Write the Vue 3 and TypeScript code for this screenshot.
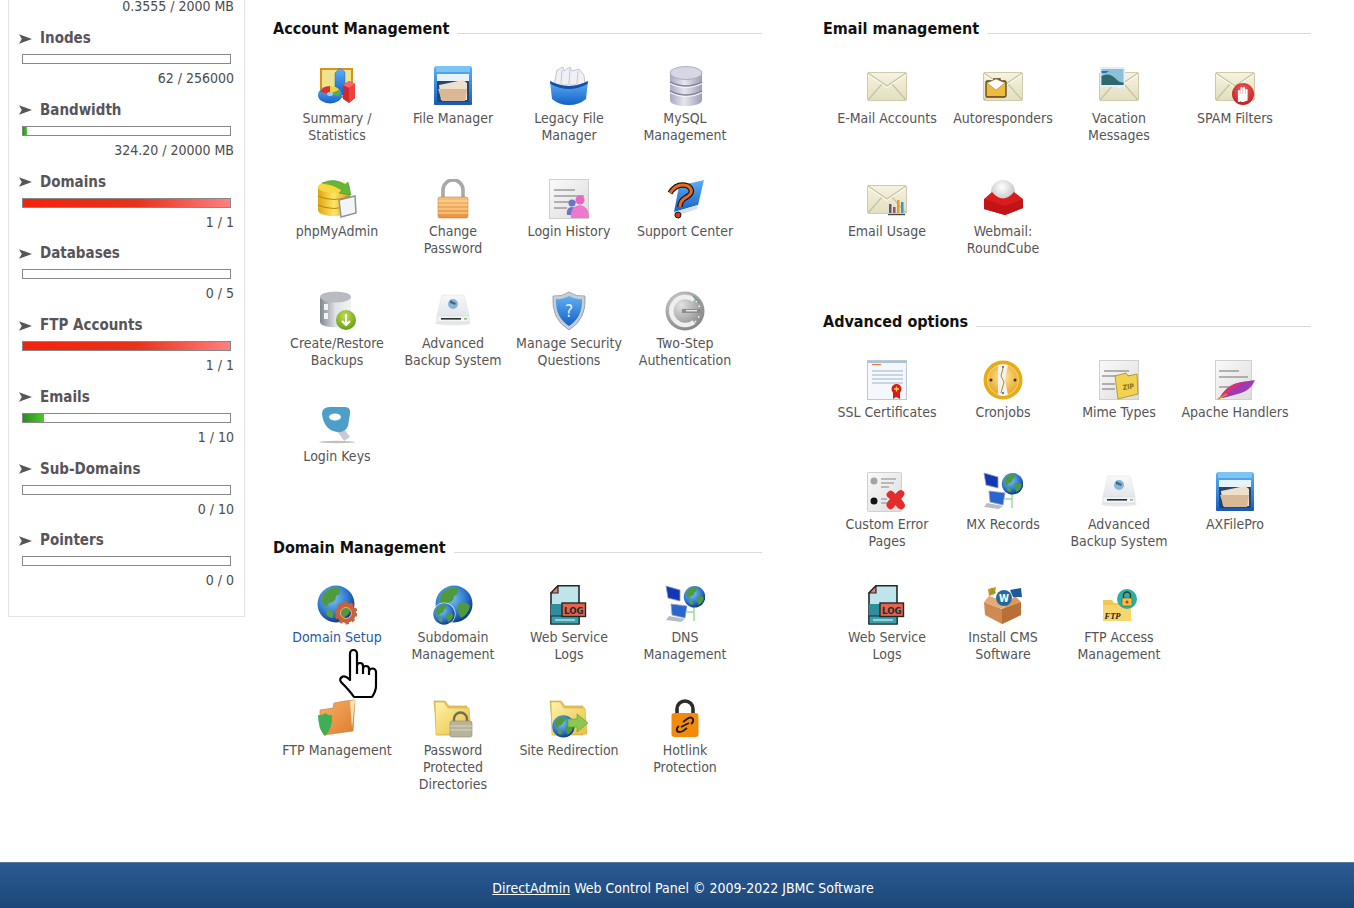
<script setup lang="ts">
interface Usage {
  title: string
  value: string
  fill?: number
  tone?: 'red' | 'green'
}

interface Item {
  label: string
  icon: string
  active?: boolean
}

interface Section {
  title: string
  items: Item[]
}

const usage: Usage[] = [
  { title: 'Inodes', value: '62 / 256000' },
  { title: 'Bandwidth', value: '324.20 / 20000 MB', fill: 2, tone: 'green' },
  { title: 'Domains', value: '1 / 1', fill: 100, tone: 'red' },
  { title: 'Databases', value: '0 / 5' },
  { title: 'FTP Accounts', value: '1 / 1', fill: 100, tone: 'red' },
  { title: 'Emails', value: '1 / 10', fill: 10, tone: 'green' },
  { title: 'Sub-Domains', value: '0 / 10' },
  { title: 'Pointers', value: '0 / 0' },
]

const leftSections: Section[] = [
  {
    title: 'Account Management',
    items: [
      { label: 'Summary /\nStatistics', icon: 'stats' },
      { label: 'File Manager', icon: 'files' },
      { label: 'Legacy File\nManager', icon: 'legacy' },
      { label: 'MySQL\nManagement', icon: 'mysql' },
      { label: 'phpMyAdmin', icon: 'pma' },
      { label: 'Change\nPassword', icon: 'padlock' },
      { label: 'Login History', icon: 'history' },
      { label: 'Support Center', icon: 'support' },
      { label: 'Create/Restore\nBackups', icon: 'restore' },
      { label: 'Advanced\nBackup System', icon: 'drive' },
      { label: 'Manage Security\nQuestions', icon: 'shield' },
      { label: 'Two-Step\nAuthentication', icon: 'dial' },
      { label: 'Login Keys', icon: 'key' },
    ],
  },
  {
    title: 'Domain Management',
    items: [
      { label: 'Domain Setup', icon: 'globegear', active: true },
      { label: 'Subdomain\nManagement', icon: 'globes' },
      { label: 'Web Service\nLogs', icon: 'log' },
      { label: 'DNS\nManagement', icon: 'network' },
      { label: 'FTP Management', icon: 'ftp' },
      { label: 'Password\nProtected\nDirectories', icon: 'lockfolder' },
      { label: 'Site Redirection', icon: 'redirect' },
      { label: 'Hotlink\nProtection', icon: 'hotlink' },
    ],
  },
]

const rightSections: Section[] = [
  {
    title: 'Email management',
    items: [
      { label: 'E-Mail Accounts', icon: 'mail' },
      { label: 'Autoresponders', icon: 'auto' },
      { label: 'Vacation\nMessages', icon: 'vacation' },
      { label: 'SPAM Filters', icon: 'spam' },
      { label: 'Email Usage', icon: 'mailusage' },
      { label: 'Webmail:\nRoundCube', icon: 'roundcube' },
    ],
  },
  {
    title: 'Advanced options',
    items: [
      { label: 'SSL Certificates', icon: 'ssl' },
      { label: 'Cronjobs', icon: 'clock' },
      { label: 'Mime Types', icon: 'zip' },
      { label: 'Apache Handlers', icon: 'feather' },
      { label: 'Custom Error\nPages', icon: 'errors' },
      { label: 'MX Records', icon: 'network' },
      { label: 'Advanced\nBackup System', icon: 'drive' },
      { label: 'AXFilePro', icon: 'files' },
      { label: 'Web Service\nLogs', icon: 'log' },
      { label: 'Install CMS\nSoftware', icon: 'cms' },
      { label: 'FTP Access\nManagement', icon: 'ftpaccess' },
    ],
  },
]

const columns = [leftSections, rightSections]
</script>

<template>
  <div class="page">
    <!-- icon sprite -->
    <svg class="sprite" aria-hidden="true">
      <defs>
        <linearGradient id="gBlue" x1="0" y1="0" x2="0" y2="1"><stop offset="0" stop-color="#5eb0f2" /><stop offset="1" stop-color="#1560c8" /></linearGradient>
        <linearGradient id="gBlueH" x1="0" y1="0" x2="1" y2="0"><stop offset="0" stop-color="#1b62c6" /><stop offset="0.5" stop-color="#3d96ea" /><stop offset="1" stop-color="#1b62c6" /></linearGradient>
        <linearGradient id="gSteel" x1="0" y1="0" x2="1" y2="0"><stop offset="0" stop-color="#a9a9c0" /><stop offset="0.45" stop-color="#e6e6f0" /><stop offset="1" stop-color="#9d9db4" /></linearGradient>
        <linearGradient id="gGrey" x1="0" y1="0" x2="1" y2="0"><stop offset="0" stop-color="#7f8790" /><stop offset="0.5" stop-color="#dfe2e6" /><stop offset="1" stop-color="#f2f3f5" /></linearGradient>
        <linearGradient id="gGold" x1="0" y1="0" x2="1" y2="0"><stop offset="0" stop-color="#dca60f" /><stop offset="0.5" stop-color="#ffe468" /><stop offset="1" stop-color="#cf9c10" /></linearGradient>
        <linearGradient id="gOrange" x1="0" y1="0" x2="0" y2="1"><stop offset="0" stop-color="#f9c078" /><stop offset="1" stop-color="#e8923a" /></linearGradient>
        <linearGradient id="gFolder" x1="0" y1="0" x2="1" y2="1"><stop offset="0" stop-color="#fff3ab" /><stop offset="1" stop-color="#e8bf3f" /></linearGradient>
        <linearGradient id="gOrangeFolder" x1="0" y1="0" x2="1" y2="1"><stop offset="0" stop-color="#f9b068" /><stop offset="1" stop-color="#dd7c2c" /></linearGradient>
        <linearGradient id="gMail" x1="0" y1="0" x2="0" y2="1"><stop offset="0" stop-color="#f6f3e0" /><stop offset="1" stop-color="#e2dec0" /></linearGradient>
        <linearGradient id="gPage" x1="0" y1="0" x2="1" y2="1"><stop offset="0" stop-color="#fafafa" /><stop offset="1" stop-color="#dcdcdc" /></linearGradient>
        <linearGradient id="gDrive" x1="0" y1="0" x2="0" y2="1"><stop offset="0" stop-color="#f6f8fa" /><stop offset="1" stop-color="#dce2e6" /></linearGradient>
        <radialGradient id="gGlobe" cx="0.4" cy="0.35" r="0.7"><stop offset="0" stop-color="#7cc4f0" /><stop offset="0.6" stop-color="#2f78cc" /><stop offset="1" stop-color="#0c2f80" /></radialGradient>
        <radialGradient id="gGreenBall" cx="0.45" cy="0.3" r="0.75"><stop offset="0" stop-color="#c6dc50" /><stop offset="1" stop-color="#5c9a10" /></radialGradient>
        <radialGradient id="gDial" cx="0.4" cy="0.35" r="0.75"><stop offset="0" stop-color="#e2e2e2" /><stop offset="1" stop-color="#7a7a7a" /></radialGradient>
        <radialGradient id="gDome" cx="0.45" cy="0.3" r="0.7"><stop offset="0" stop-color="#ffffff" /><stop offset="1" stop-color="#b8b8b8" /></radialGradient>
        <radialGradient id="gStop" cx="0.5" cy="0.35" r="0.7"><stop offset="0" stop-color="#f46060" /><stop offset="1" stop-color="#c01818" /></radialGradient>
        <radialGradient id="gClock" cx="0.5" cy="0.4" r="0.6"><stop offset="0" stop-color="#ffe9a0" /><stop offset="1" stop-color="#e6a420" /></radialGradient>
      </defs>

      <symbol id="i-stats" viewBox="0 0 40 40">
        <rect x="4" y="3" width="31" height="28" fill="#eee38a" stroke="#d9901f" stroke-width="2" />
        <path d="M18 7 23 2 28 6V29H18Z" fill="url(#gBlue)" stroke="#2268c0" stroke-width=".5" />
        <path d="M26 19 32 15 38 18V32L32 37 26 33Z" fill="#d8262a" />
        <path d="M26 19 32 15 38 18 32 22Z" fill="#f4686a" />
        <path d="M32 22V37L38 32V18Z" fill="#ef4040" />
        <ellipse cx="13" cy="29" rx="12" ry="8.5" fill="url(#gBlue)" />
        <path d="M13 28 3 26Q5 20 13 20Z" fill="#d8342a" />
        <path d="M13 28V20Q20 20 22 24Z" fill="#f2d23a" />
        <path d="M13 28 22 24Q24 27 22 30Z" fill="#5ab040" />
        <ellipse cx="13" cy="28" rx="3" ry="2" fill="#9cc8f4" />
      </symbol>

      <symbol id="i-files" viewBox="0 0 40 40">
        <rect x="1" y="0" width="38" height="39" rx="3" fill="url(#gBlue)" />
        <rect x="3" y="0" width="34" height="6" rx="1" fill="#7cc4f6" />
        <rect x="4" y="8" width="32" height="28" fill="#24476e" />
        <rect x="4" y="8" width="32" height="7" fill="#e8f2fa" />
        <path d="M6 19 30 14 34 17V34H8Z" fill="#efe0cc" />
        <path d="M5 23H34L32 35H9Z" fill="#d9b896" />
        <rect x="1" y="36" width="38" height="3" rx="1" fill="#1b5bb4" />
      </symbol>

      <symbol id="i-legacy" viewBox="0 0 40 40">
        <path d="M5 19 8 4 14 1 15 5 21 1 23 5 30 3 35 9 36 19Z" fill="#eef0f4" stroke="#b4b8c0" stroke-width=".8" />
        <path d="M13 4 12 18M21 3 20 18M29 5 28 18" stroke="#c4c8d0" stroke-width="1" />
        <path d="M1 15Q20 25 39 15L37 33Q30 39 20 39 10 39 3 33Z" fill="url(#gBlue)" />
        <path d="M1 15Q20 25 39 15L38.500 18Q20 28 1.400 18Z" fill="#1450a8" />
      </symbol>

      <symbol id="i-mysql" viewBox="0 0 40 40">
        <path d="M5 7V34C5 42 37 42 37 34V7Z" fill="url(#gSteel)" />
        <ellipse cx="21" cy="7" rx="16" ry="6.500" fill="#d6d6e4" stroke="#a0a0b4" stroke-width=".8" />
        <path d="M5 16Q21 24 37 16M5 25Q21 33 37 25" fill="none" stroke="#85859c" stroke-width="1.400" />
        <path d="M5 17.500Q21 25.500 37 17.500M5 26.500Q21 34.500 37 26.500" fill="none" stroke="#f4f4fa" stroke-width="1.200" />
      </symbol>

      <symbol id="i-pma" viewBox="0 0 40 40">
        <path d="M1 8V31C1 39 33 39 33 31V8Z" fill="url(#gGold)" />
        <ellipse cx="17" cy="8" rx="16" ry="6" fill="#f8d842" />
        <path d="M1 17Q17 24 33 17M1 26Q17 33 33 26" fill="none" stroke="#b98a10" stroke-width="1.200" />
        <path d="M22 21 38 17 39 34 24 38Z" fill="#f3f4f6" stroke="#8d949c" stroke-width="1.500" />
        <path d="M5 4Q18-2 28 6L31 3 34 16 22 14 25 11Q16 5 5 4Z" fill="#62b83a" stroke="#3f8a24" stroke-width=".5" />
      </symbol>

      <symbol id="i-padlock" viewBox="0 0 40 40">
        <path d="M10 20V11A10 10 0 0 1 30 11V20" fill="none" stroke="#a8a8a8" stroke-width="3.600" />
        <rect x="5" y="18" width="30" height="21" rx="2" fill="url(#gOrange)" stroke="#c9853f" stroke-width=".6" />
        <path d="M5 22H35M5 26H35M5 30H35M5 34H35" stroke="#fbd9a4" stroke-width="1.200" />
      </symbol>

      <symbol id="i-history" viewBox="0 0 40 40">
        <rect x=".5" y=".5" width="39" height="39" fill="url(#gPage)" stroke="#d0d0d0" />
        <path d="M5 11H26M5 17H35M5 23H27M5 29H18" stroke="#9a9a9a" stroke-width="1.600" />
        <circle cx="23" cy="24" r="3.500" fill="#6a74c8" />
        <path d="M18 36Q17 28 23 28 28 28 28 36Z" fill="#6a74c8" />
        <circle cx="31" cy="21" r="4.500" fill="#ea64c4" />
        <path d="M22 39Q21 27 31 26 40 27 40 39Z" fill="#ee78cc" />
      </symbol>

      <symbol id="i-support" viewBox="0 0 40 40">
        <path d="M14 7 39 1 33 26 9 33Z" fill="url(#gBlue)" />
        <path d="M9 33 33 26 32 30 9 38Z" fill="#d8e0ea" />
        <path d="M5 14Q12 3 23 7 31 13 20 19 15 22 15 28" fill="none" stroke="#1b1b1b" stroke-width="5.500" />
        <path d="M5 14Q12 3 23 7 31 13 20 19 15 22 15 28" fill="none" stroke="#ea6a1c" stroke-width="3" />
        <circle cx="13" cy="36" r="3" fill="#d23a1a" stroke="#1b1b1b" />
      </symbol>

      <symbol id="i-restore" viewBox="0 0 40 40">
        <path d="M3 6V31C3 38 34 38 34 31V6Z" fill="url(#gGrey)" />
        <ellipse cx="18.500" cy="6" rx="15.500" ry="5.500" fill="#b8bcc2" />
        <rect x="7" y="13" width="4" height="6" fill="#f0f2f4" />
        <rect x="7" y="22" width="4" height="6" fill="#f0f2f4" />
        <circle cx="29" cy="29" r="10" fill="url(#gGreenBall)" />
        <path d="M29 23V34M25 30 29 34 33 30" fill="none" stroke="#fff" stroke-width="2" />
      </symbol>

      <symbol id="i-drive" viewBox="0 0 40 40">
        <ellipse cx="20" cy="32" rx="18" ry="2.500" fill="#e6e8ea" />
        <path d="M9 4H31L36 24V31H4V24Z" fill="url(#gDrive)" stroke="#e0e4e8" stroke-width=".6" />
        <rect x="4" y="25" width="32" height="6" rx="1" fill="#f2f4f5" stroke="#cfd4d8" stroke-width=".5" />
        <rect x="8" y="27" width="20" height="1.600" fill="#2c3030" />
        <rect x="31" y="27" width="3" height="1.600" fill="#8fbf6a" />
        <circle cx="20" cy="13" r="5" fill="#8cb4d0" />
        <path d="M17 9 23 12 20 18 22 14 17 12Z" fill="#386c94" />
      </symbol>

      <symbol id="i-shield" viewBox="0 0 40 40">
        <path d="M20 1Q27 6 36 5 38 28 20 39 2 28 4 5 13 6 20 1Z" fill="#c8ced8" stroke="#8d949e" stroke-width=".8" />
        <path d="M20 5Q27 9 33 8 34 26 20 35 6 26 7 8 13 9 20 5Z" fill="url(#gBlue)" />
        <text x="20" y="26" text-anchor="middle" font-size="17" fill="#e8f2fc">?</text>
      </symbol>

      <symbol id="i-dial" viewBox="0 0 40 40">
        <circle cx="20" cy="20" r="19.500" fill="url(#gDial)" />
        <circle cx="20" cy="20" r="15" fill="none" stroke="#f4f4f4" stroke-width="1.600" stroke-dasharray="1.500 4" />
        <path d="M29 9A14 14 0 1 0 29 31" fill="none" stroke="#efefef" stroke-width="4.500" />
        <rect x="17" y="18" width="19" height="4" fill="#8c8c8c" />
        <rect x="21" y="19" width="11" height="1.400" fill="#e8e8e8" />
        <path d="M28 5 35 12" stroke="#6a9a92" stroke-width="1.500" />
      </symbol>

      <symbol id="i-key" viewBox="0 0 40 40">
        <ellipse cx="20" cy="38" rx="18" ry="1.200" fill="#c0c0c0" />
        <path d="M18 24 27 37 33 33 25 22Z" fill="#c8ccd0" />
        <path d="M5 10Q5 3 13 3H28Q34 3 33 10L31 22Q28 29 20 28 7 26 5 10Z" fill="#4b9fc8" />
        <ellipse cx="18" cy="13" rx="6" ry="3.500" fill="#fff" />
      </symbol>

      <g id="i-globe">
        <circle cx="19" cy="19" r="18.500" fill="url(#gGlobe)" />
        <path d="M7 8Q15 1 22 3 25 8 19 11 19 17 12 18 10 23 7 20 3 15 7 8Z" fill="#4f9a3c" />
        <path d="M23 19Q31 15 35 21 33 30 26 33 22 27 23 19Z" fill="#4f9a3c" />
        <path d="M11 24Q17 25 16 33 12 33 9 29Z" fill="#5aa040" />
      </g>

      <symbol id="i-globegear" viewBox="0 0 40 40">
        <use href="#i-globe" />
        <circle cx="29" cy="28" r="7.500" fill="none" stroke="#c8623a" stroke-width="5" />
        <circle cx="29" cy="28" r="10.200" fill="none" stroke="#c8623a" stroke-width="2.600" stroke-dasharray="3.500 3" />
        <circle cx="29" cy="28" r="5.500" fill="none" stroke="#f0a888" stroke-width="1" />
      </symbol>

      <symbol id="i-globes" viewBox="0 0 40 40">
        <g transform="translate(2 0)"><use href="#i-globe" /></g>
        <g transform="translate(0 18) scale(.58)"><circle cx="19" cy="19" r="20" fill="#fff" opacity=".7" /><use href="#i-globe" /></g>
      </symbol>

      <symbol id="i-log" viewBox="0 0 40 40">
        <path d="M9 .8H30V38.800H2V8Z" fill="#bfe4ea" stroke="#1d2a30" stroke-width="1.600" />
        <path d="M2 8 9 .8V8Z" fill="#ee7d68" stroke="#1d2a30" stroke-width="1.200" />
        <rect x="2" y="19" width="28" height="12" fill="#2d8f9c" />
        <rect x="2" y="31" width="28" height="8" fill="#3ca0ac" stroke="#1d2a30" />
        <path d="M6 35H26" stroke="#d4eef0" stroke-width="1.200" />
        <rect x="13" y="18" width="23.500" height="13.500" fill="#e4634b" stroke="#1d2a30" stroke-width="1.400" />
        <text x="24.800" y="28.500" text-anchor="middle" font-size="9.500" font-weight="700" fill="#1d2a30">LOG</text>
      </symbol>

      <symbol id="i-network" viewBox="0 0 40 40">
        <path d="M29 20V36M22 27H29" stroke="#98dc90" stroke-width="1.400" />
        <path d="M1 1 15 5V16L3 13Z" fill="#1238b8" stroke="#9aa0b0" stroke-width=".8" />
        <path d="M6 19 22 21 20 33 7 30Z" fill="#2a66d0" stroke="#9aa0b0" stroke-width=".8" />
        <path d="M4 31 20 34 16 37 1 35Z" fill="#b8bcc4" />
        <g transform="translate(18.500 .8) scale(.58)"><use href="#i-globe" /></g>
      </symbol>

      <symbol id="i-ftp" viewBox="0 0 40 40">
        <path d="M3 12 16 10 17 5 28 3 38 2 36 33 7 37 3 30Z" fill="url(#gOrangeFolder)" stroke="#c87830" stroke-width=".6" />
        <path d="M33 3 35 30 38 2Z" fill="#fbe4c0" />
        <path d="M1 17Q5 18 8 15 12 18 15 17 16 30 8 38 1 30 1 17Z" fill="#3cb054" />
      </symbol>

      <g id="i-folder">
        <path d="M1 3H12L16 8H34V37H4Z" fill="#e8c460" stroke="#c8a440" stroke-width=".6" />
        <path d="M3 37 2 4H11L15 10H36L38 36Z" fill="url(#gFolder)" stroke="#d4ae40" stroke-width=".6" />
      </g>

      <symbol id="i-lockfolder" viewBox="0 0 40 40">
        <use href="#i-folder" />
        <path d="M21 24V21A6.500 6.500 0 0 1 34 21V24" fill="none" stroke="#6e6e5c" stroke-width="2.400" />
        <rect x="17" y="23" width="22" height="16" rx="2" fill="#b8b49c" stroke="#8a8874" stroke-width=".6" />
        <path d="M17 28H39M17 32H39" stroke="#d8d4c0" stroke-width="1" />
      </symbol>

      <symbol id="i-redirect" viewBox="0 0 40 40">
        <use href="#i-folder" />
        <g transform="translate(3 17) scale(.6)"><use href="#i-globe" /></g>
        <path d="M19 21H28V16L39 25 28 34V29H19Z" fill="#8cc850" stroke="#5a9a30" stroke-width=".6" />
      </symbol>

      <symbol id="i-hotlink" viewBox="0 0 40 40">
        <path d="M12 17V11A8 8 0 0 1 28 11V17" fill="none" stroke="#2e2a28" stroke-width="3.600" />
        <rect x="6.500" y="15" width="27" height="24" rx="3" fill="#f28a0a" />
        <path d="M18 24 22 21Q26 18 28 21 29 24 26 26M22 30 18 33Q14 35 12 33 11 30 14 28M16 29 24 25" fill="none" stroke="#1e1a14" stroke-width="1.800" />
      </symbol>

      <symbol id="i-mail" viewBox="0 0 40 40">
        <rect x=".5" y="6.500" width="39" height="28" rx="1.500" fill="url(#gMail)" stroke="#cfcbab" />
        <path d="M1 7 20 20 39 7M1 34 15 18M39 34 25 18" fill="none" stroke="#c7c3a2" stroke-width="1.200" />
        <path d="M1 8.500 20 21.500 39 8.500" fill="none" stroke="#fffef4" />
      </symbol>

      <symbol id="i-auto" viewBox="0 0 40 40">
        <use href="#i-mail" />
        <path d="M11 13H17V16H11Z" fill="none" stroke="#5a4018" stroke-width="1.400" />
        <rect x="3" y="15" width="20" height="16" rx="1.500" fill="#eebc3c" stroke="#5a4018" stroke-width="1.300" />
        <path d="M4 17 13 24 22 17 13 13Z" fill="#fff" stroke="#8a7040" stroke-width=".5" />
      </symbol>

      <symbol id="i-vacation" viewBox="0 0 40 40">
        <use href="#i-mail" />
        <rect x="1" y="1" width="25" height="20" fill="#e4eef4" />
        <rect x="2.500" y="3" width="22" height="16" fill="#8cc0d8" />
        <path d="M2.500 10Q10 6 16 12T24.500 16V19H2.500Z" fill="#2e6a6a" />
        <path d="M2.500 5H10L7 7H2.500Z" fill="#2a70b8" />
      </symbol>

      <symbol id="i-spam" viewBox="0 0 40 40">
        <use href="#i-mail" />
        <circle cx="28" cy="28" r="11" fill="url(#gStop)" />
        <path d="M24 35V25M26.500 34V22M29 34V22M31.500 34V24" stroke="#fff" stroke-width="2.200" stroke-linecap="round" />
        <path d="M24 28H32V34L29 36H26L24 33Z" fill="#fff" />
      </symbol>

      <symbol id="i-mailusage" viewBox="0 0 40 40">
        <use href="#i-mail" />
        <rect x="22" y="25" width="2.500" height="9" fill="#5a5a78" />
        <rect x="26" y="28" width="2.500" height="6" fill="#a04a7a" />
        <rect x="30" y="21" width="2.500" height="13" fill="#e0a030" />
        <rect x="34" y="23" width="2.500" height="11" fill="#3a98c8" />
        <rect x="21" y="35" width="17" height="1.200" fill="#444" />
      </symbol>

      <symbol id="i-roundcube" viewBox="0 0 40 40">
        <circle cx="20" cy="13" r="12" fill="url(#gDome)" />
        <path d="M1 20 9 13Q20 26 31 13L40 20V29L22 36 1 30Z" fill="#d91c1c" />
        <path d="M1 20 22 27 40 20V29L22 36 1 30Z" fill="#c01418" />
      </symbol>

      <symbol id="i-ssl" viewBox="0 0 40 40">
        <rect x=".5" y=".5" width="39" height="39" fill="#f4f8fc" stroke="#bcc8d4" />
        <rect x="1" y="1" width="38" height="2" fill="#a8c4dc" />
        <path d="M5 4.500H14" stroke="#e87838" stroke-width="1.200" />
        <path d="M5 11H36M5 15H36M5 19H36M5 23H36" stroke="#9cb4cc" stroke-width="1" />
        <path d="M26 31V39L29 37 33 39V31Z" fill="#d81c1c" />
        <circle cx="29.500" cy="29" r="5" fill="#d81c1c" />
        <path d="M29.500 26.500V31.500M27 29H32" stroke="#f8d040" stroke-width="1.300" />
      </symbol>

      <symbol id="i-clock" viewBox="0 0 40 40">
        <circle cx="20" cy="20" r="19.500" fill="#e8ab18" />
        <circle cx="20" cy="20" r="15.500" fill="url(#gClock)" stroke="#f8d878" stroke-width="1" />
        <path d="M15 5A15.500 15.500 0 0 1 25 5L22 20 25 35A15.500 15.500 0 0 1 15 35Z" fill="#f2f2f0" />
        <circle cx="8" cy="20" r="1.500" fill="#333" />
        <circle cx="32" cy="20" r="1.500" fill="#333" />
        <circle cx="20" cy="7" r="1" fill="#555" />
        <circle cx="20" cy="33" r="1" fill="#555" />
        <path d="M20 8 18 16 21 22 18 33" fill="none" stroke="#b8862a" stroke-width="1" />
      </symbol>

      <g id="i-page">
        <rect x=".5" y=".5" width="39" height="39" fill="url(#gPage)" stroke="#d0d0d0" />
        <path d="M5 11H30M3 16H34M3 24H16M3 29H16" stroke="#9a9a9a" stroke-width="1.500" />
      </g>

      <symbol id="i-zip" viewBox="0 0 40 40">
        <use href="#i-page" />
        <path d="M16 16 27 13 29 16 38 14 39 34 19 39Z" fill="#f2d24e" stroke="#a88a28" stroke-width=".8" />
        <text x="24" y="30" font-size="7" font-weight="700" fill="#8a7020" transform="rotate(-8 24 30)">ZIP</text>
      </symbol>

      <symbol id="i-feather" viewBox="0 0 40 40">
        <rect x=".5" y=".5" width="36" height="39" fill="url(#gPage)" stroke="#d0d0d0" />
        <path d="M4 11H24M4 17H33M4 27H16" stroke="#9a9a9a" stroke-width="1.500" />
        <path d="M5 37Q14 22 34 21 41 20 40 20 36 30 26 33 16 36 8 38Z" fill="#a03ab4" />
        <path d="M5 37Q14 22 30 22 20 27 14 33Z" fill="#d8307a" />
        <path d="M3 39 12 34" stroke="#d89028" stroke-width="1.500" />
      </symbol>

      <symbol id="i-errors" viewBox="0 0 40 40">
        <rect x=".5" y=".5" width="34" height="39" rx="1" fill="url(#gPage)" stroke="#d0d0d0" />
        <circle cx="7" cy="9" r="3.500" fill="#a4a4a4" />
        <circle cx="7" cy="29" r="3.500" fill="#111" />
        <path d="M14 7H29M14 11H27M14 15H22M14 27H20M14 31H20" stroke="#a8a8a8" stroke-width="1.300" />
        <path d="M21 20Q24 16 28.500 22 33 16 36 19 40 21 34 27 40 33 37 36 33 40 28.500 33 24 40 21 36 17 33 23 27 17 23 21 20Z" fill="#e42c2c" />
      </symbol>

      <symbol id="i-cms" viewBox="0 0 40 40">
        <path d="M1 17 19 24 38 17V30L19 39 2 30Z" fill="#cf8a52" />
        <path d="M19 24V39L38 30V17Z" fill="#b87038" />
        <path d="M1 17 6 11 24 17 19 24Z" fill="#e4aa74" />
        <path d="M38 17 32 11 19 24Z" fill="#d89860" />
        <circle cx="21" cy="13" r="8" fill="#25699c" />
        <text x="21" y="17" text-anchor="middle" font-size="10" font-weight="700" fill="#fff">W</text>
        <path d="M5 4 13 2 12 9 6 11Z" fill="#e88a20" />
        <path d="M9 3 13 8 6 9Z" fill="#78a830" />
        <path d="M27 5 38 3 39 12 30 12Z" fill="#1d5a9c" />
      </symbol>

      <symbol id="i-ftpaccess" viewBox="0 0 40 40">
        <path d="M4 15H13L15 18H32V36H4Z" fill="#f0c850" />
        <rect x="4" y="20" width="28" height="16" fill="#f8d66c" />
        <text x="5.500" y="34" font-size="8.500" font-weight="700" font-style="italic" fill="#222" font-family="'Liberation Serif', serif">FTP</text>
        <circle cx="28" cy="14" r="10" fill="#2eb0a0" />
        <path d="M24.500 13V10.500A3.500 3.500 0 0 1 31.500 10.500V13" fill="none" stroke="#333" stroke-width="1.400" />
        <rect x="23" y="13" width="10" height="8" rx="1.500" fill="#f4c040" stroke="#555" stroke-width=".6" />
        <circle cx="28" cy="17" r="1.500" fill="#d8341a" />
      </symbol>
    </svg>

    <div class="content">
      <aside class="usage">
        <div class="usage-value usage-first">0.3555 / 2000 MB</div>
        <div v-for="row in usage" :key="row.title" class="usage-row">
          <div class="usage-title">
            <svg class="arrow" viewBox="0 0 14 10"><path d="M0 0 14 5 0 10 3 5Z" /></svg>
            {{ row.title }}
          </div>
          <div class="bar">
            <div v-if="row.fill" class="bar-fill" :class="row.tone" :style="{ width: row.fill + '%' }"></div>
          </div>
          <div class="usage-value">{{ row.value }}</div>
        </div>
      </aside>

      <main class="columns">
        <div v-for="(column, c) in columns" :key="c" class="column">
          <section v-for="section in column" :key="section.title" class="section">
            <h2 class="section-title"><span>{{ section.title }}</span></h2>
            <div class="grid">
              <a v-for="item in section.items" :key="item.label" class="cell" :class="{ active: item.active }">
                <svg class="icon"><use :href="'#i-' + item.icon" /></svg>
                <span class="label">{{ item.label }}</span>
                <svg v-if="item.active" class="hand" viewBox="0 0 40 50">
                  <path d="M11 31V4.500a3.500 3.500 0 0 1 7 0V17a3 3 0 0 1 6 0V20a3 3 0 0 1 6 0V23a3.500 3.500 0 0 1 7 0V37q0 5-4 11H15Q11 42 2 33q-2-3 1-5 3-2 8 3Z" />
                  <path d="M18 17V25M24 20V25M30 23V26" />
                </svg>
              </a>
            </div>
          </section>
        </div>
      </main>
    </div>

    <footer class="footer">
      <span><a class="footer-link">DirectAdmin</a> Web Control Panel © 2009-2022 JBMC Software</span>
    </footer>
  </div>
</template>

<style scoped>
.page {
  display: flex;
  flex-direction: column;
  height: 908px;
  overflow: hidden;
  background: #fff;
  font-family: "DejaVu Sans", Verdana, sans-serif;
  font-stretch: condensed;
  font-size: 14px;
  line-height: 17px;
  color: #555;
}

.sprite {
  position: absolute;
  width: 0;
  height: 0;
}

.content {
  display: flex;
  flex: 1;
  align-items: flex-start;
  min-height: 0;
}

.usage {
  box-sizing: border-box;
  width: 237px;
  margin: -2px 0 0 8px;
  padding: 0 10px 12px;
  border: 1px solid #e4e4e4;
  border-top: 0;
}

.usage-first {
  margin-top: .5px;
  margin-bottom: 15px;
}

.usage-row {
  height: 71.75px;
}

.usage-title {
  display: flex;
  align-items: center;
  height: 17px;
  margin-bottom: 7px;
  font-size: 15px;
  font-weight: 700;
  color: #58545a;
}

.arrow {
  width: 13px;
  height: 10px;
  margin-right: 8px;
  fill: #58545a;
}

.bar {
  box-sizing: border-box;
  height: 10px;
  margin: 0 3px;
  border: 1px solid #888;
  background: #fff;
}

.bar-fill {
  height: 100%;
}

.bar-fill.red {
  background: linear-gradient(90deg, #f5220c, #e8321c 55%, #ff8080);
}

.bar-fill.green {
  background: linear-gradient(90deg, #2d8a1e, #52c832);
}

.usage-value {
  margin-top: 6px;
  text-align: right;
  color: #4c4c4c;
}

.usage-first.usage-value {
  margin-top: 0;
}

.columns {
  display: grid;
  grid-template-columns: 489px 488px;
  column-gap: 61px;
  margin-left: 28px;
  padding-top: 19px;
}

.section + .section {
  margin-top: 21.5px;
}

.section-title {
  display: flex;
  align-items: center;
  height: 18px;
  margin: 0 0 29px;
  font-size: 16px;
  font-weight: 700;
  color: #111;
}

.section-title::after {
  content: "";
  flex: 1;
  height: 1px;
  margin: 10px 0 0 8px;
  background: #dcdcdc;
}

.grid {
  display: grid;
  grid-template-columns: repeat(4, 116px);
  grid-auto-rows: 112.67px;
  padding-left: 6px;
}

.cell {
  position: relative;
  display: flex;
  flex-direction: column;
  align-items: center;
}

.icon {
  display: block;
  flex: none;
  width: 40px;
  height: 40px;
  overflow: visible;
}

.label {
  margin-top: 4px;
  text-align: center;
  white-space: pre-line;
}

.cell.active .label {
  color: #2459a8;
}

.hand {
  position: absolute;
  left: 60px;
  top: 64px;
  width: 40px;
  height: 50px;
  fill: #fff;
  stroke: #000;
  stroke-width: 2.2;
  stroke-linejoin: round;
  overflow: visible;
}

.footer {
  display: flex;
  flex: none;
  align-items: center;
  justify-content: center;
  box-sizing: border-box;
  height: 46px;
  padding: 5px 0 0 12px;
  border-top: 1px solid #5d7a9c;
  background: linear-gradient(#2b5b94, #1c4676);
  color: #fff;
}

.footer-link {
  text-decoration: underline;
}
</style>
